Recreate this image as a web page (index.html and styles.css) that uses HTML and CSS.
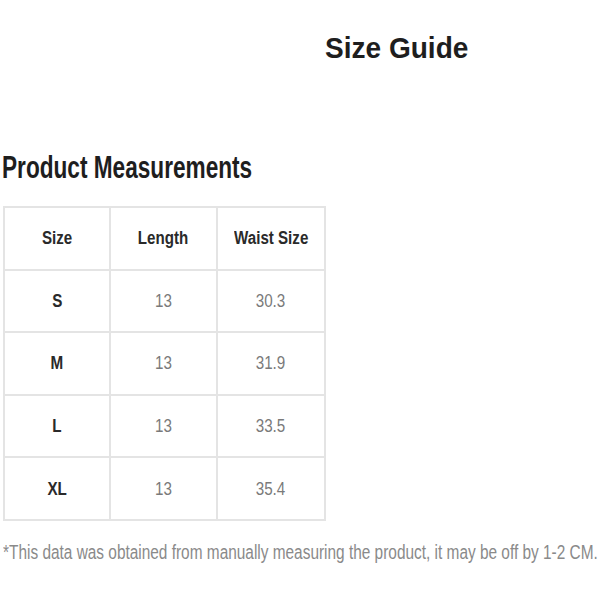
FILE: index.html
```html
<!DOCTYPE html>
<html>
<head>
<meta charset="utf-8">
<link rel="stylesheet" href="styles.css">
</head>
<body>
<div class="page">
  <h1 class="title"><span class="sq-title">Size Guide</span></h1>
  <h2 class="subtitle"><span class="sq-sub">Product Measurements</span></h2>
  <table class="sizes">
    <thead>
      <tr><th><span class="sq">Size</span></th><th><span class="sq">Length</span></th><th><span class="sq">Waist Size</span></th></tr>
    </thead>
    <tbody>
      <tr><td class="sz"><span class="sq">S</span></td><td><span class="sq">13</span></td><td><span class="sq">30.3</span></td></tr>
      <tr><td class="sz"><span class="sq">M</span></td><td><span class="sq">13</span></td><td><span class="sq">31.9</span></td></tr>
      <tr><td class="sz"><span class="sq">L</span></td><td><span class="sq">13</span></td><td><span class="sq">33.5</span></td></tr>
      <tr><td class="sz"><span class="sq">XL</span></td><td><span class="sq">13</span></td><td><span class="sq">35.4</span></td></tr>
    </tbody>
  </table>
  <p class="note"><span class="sq-note">*This data was obtained from manually measuring the product, it may be off by 1-2 CM.</span></p>
</div>
</body>
</html>
```
FILE: styles.css
```css
html, body {
  margin: 0;
  padding: 0;
  background: #fff;
}
.page {
  width: 600px;
  height: 600px;
  overflow: hidden;
  font-family: "Liberation Sans", Arial, sans-serif;
}
.title {
  margin: 0;
  padding: 31px 0 0 325px;
  font-size: 30px;
  font-weight: bold;
  line-height: 34px;
  color: #1e1e1e;
  white-space: nowrap;
}
.sq-title {
  display: inline-block;
  transform: scaleX(0.935);
  transform-origin: left center;
}
.subtitle {
  margin: 84px 0 0 2px;
  font-size: 32px;
  font-weight: bold;
  line-height: 37px;
  color: #1e1e1e;
  white-space: nowrap;
}
.sq-sub {
  display: inline-block;
  transform: scaleX(0.707);
  transform-origin: left center;
}
.sizes {
  margin: 20px 0 0 3px;
  border-collapse: collapse;
  width: 323px;
}
.sizes th, .sizes td {
  border: 2px solid #e4e4e4;
  height: 60.6px;
  padding: 0;
  text-align: center;
  width: 107px;
  font-size: 19px;
  white-space: nowrap;
}
.sq {
  display: inline-block;
  transform: scaleX(0.8);
  transform-origin: center center;
}
.sizes th {
  font-size: 18px;
  font-weight: bold;
  color: #2a2a2a;
}
.sizes th .sq {
  transform: scaleX(0.84);
}
.sizes td {
  color: #7a7a7a;
}
.sizes td.sz {
  font-weight: bold;
  color: #2a2a2a;
}
.note {
  margin: 20px 0 0 3px;
  font-size: 19.5px;
  line-height: 22px;
  color: #8a8a8a;
  white-space: nowrap;
}
.sq-note {
  display: inline-block;
  transform: scaleX(0.79);
  transform-origin: left center;
}
```
